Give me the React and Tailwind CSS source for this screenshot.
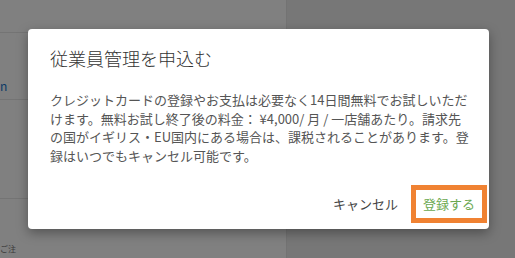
import React from "react";

export default function App() {
  const font = { fontFamily: '"Noto Sans CJK JP", "Noto Sans", sans-serif' };
  return (
    <div className="relative w-[515px] h-[258px] overflow-hidden flex bg-[#777777]" style={font}>
      {/* underlying page (dimmed) */}
      <div className="w-[287px] h-full bg-[#808080] border-r border-r-[#737373] flex flex-col">
        <div className="h-[33px] border-b border-b-[#747474]" />
        <div className="h-[67px] border-b border-b-[#747474] flex items-end pb-[6px]">
          <span className="text-[12px] leading-[14px] text-[#0b3a66]">n</span>
        </div>
        <div className="h-[99px] border-b border-b-[#747474]" />
        <div className="flex-1 flex items-end pb-[4px]">
          <span className="text-[8px] leading-[10px] text-[#3a3a3a]">ご注</span>
        </div>
      </div>
      <div className="flex-1 h-full bg-[#777777]" />

      {/* dialog */}
      <div className="absolute left-[28px] top-[29px] w-[461px] h-[200px] bg-white rounded-[4px] shadow-[0_4px_12px_rgba(0,0,0,0.35)] flex flex-col">
        <div className="pl-[22px] pr-[20px] pt-[17px]">
          <h2 className="text-[18px] leading-[24px] text-[#333333] font-light whitespace-nowrap">従業員管理を申込む</h2>
          <div className="mt-[21px] text-[13px] leading-[18.5px] text-[#555555]">
            <div className="whitespace-nowrap">クレジットカードの登録やお支払は必要なく14日間無料でお試しいただ</div>
            <div className="whitespace-nowrap">けます。無料お試し終了後の料金： ¥4,000/ 月 / 一店舗あたり。請求先</div>
            <div className="whitespace-nowrap">の国がイギリス・EU国内にある場合は、課税されることがあります。登</div>
            <div className="whitespace-nowrap">録はいつでもキャンセル可能です。</div>
          </div>
        </div>
        <div className="mt-auto flex justify-end items-center pr-[2px] pb-[6px] gap-[13px]">
          <button className="text-[13px] leading-[18px] text-[#444444] whitespace-nowrap">キャンセル</button>
          <button className="h-[38px] w-[76px] border-[5px] border-[#f08232] flex items-center justify-center text-[13px] leading-[18px] text-[#6aa84f] whitespace-nowrap">登録する</button>
        </div>
      </div>
    </div>
  );
}
